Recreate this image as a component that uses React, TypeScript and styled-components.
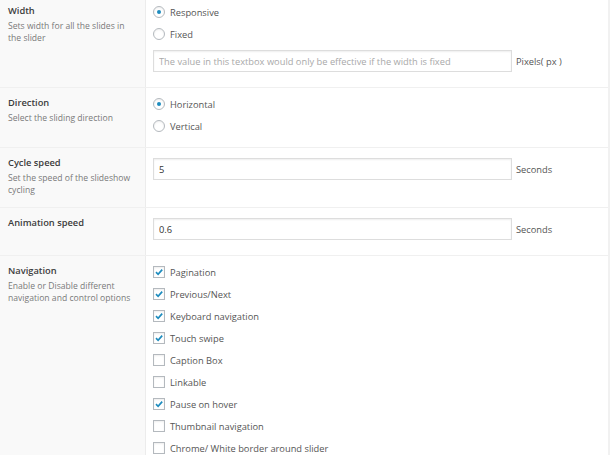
import React from 'react';
import styled, { createGlobalStyle } from 'styled-components';

const GlobalStyle = createGlobalStyle`
    html, body {
        margin: 0;
        padding: 0;
        background: #f1f1f1;
    }
    body {
        font-family: "Open Sans", "Liberation Sans", Arial, sans-serif;
        color: #444;
        overflow: hidden;
    }
`;

const Table = styled.div`
    width: 608px;
    margin-top: -4px;
    background: #fff;
`;

const Row = styled.div`
    display: flex;
    border-bottom: 1px solid #f0f0f0;
`;

const Heading = styled.div`
    flex: 0 0 129px;
    padding: 8px 8px 11px 8px;
    background: #f9f9f9;
    border-right: 1px solid #ececec;
`;

const Title = styled.div`
    font-size: 9.3px;
    font-weight: 600;
    line-height: 13px;
    color: #3c3c3c;
`;

const Description = styled.div`
    margin-top: 3px;
    font-size: 8.6px;
    line-height: 12px;
    color: #7a7a7a;
`;

const Content = styled.div`
    flex: 1;
    padding: 5px 10px 10px 7px;
`;

const OptionList = styled.div`
    display: flex;
    flex-direction: column;
`;

const Option = styled.label`
    display: flex;
    align-items: center;
    gap: 5px;
    height: 22px;
    font-size: 9.3px;
    color: #555;
`;

const RadioMark = styled.span<{ $checked: boolean }>`
    box-sizing: border-box;
    width: 12px;
    height: 12px;
    border-radius: 50%;
    border: 1px solid #b4b9be;
    background: #fff;
    box-shadow: inset 0 1px 2px rgba(0, 0, 0, 0.07);
    display: flex;
    align-items: center;
    justify-content: center;
    &::after {
        content: '';
        display: ${p => (p.$checked ? 'block' : 'none')};
        width: 4px;
        height: 4px;
        border-radius: 50%;
        background: #1e8cbe;
    }
`;

const CheckBox = styled.span`
    box-sizing: border-box;
    width: 12px;
    height: 12px;
    border: 1px solid #b4b9be;
    background: #fff;
    box-shadow: inset 0 1px 2px rgba(0, 0, 0, 0.07);
    display: flex;
    align-items: center;
    justify-content: center;
`;

const FieldLine = styled.div`
    display: flex;
    align-items: center;
    gap: 4px;
    margin: 5px 0;
`;

const TextBox = styled.input`
    box-sizing: border-box;
    width: 359px;
    height: 22px;
    margin: 0;
    padding: 0 5px;
    border: 1px solid #dddddd;
    box-shadow: inset 0 1px 2px rgba(0, 0, 0, 0.07);
    font-family: inherit;
    font-size: 9.3px;
    color: #333;
    outline: none;
    &::placeholder {
        color: #a9a9a9;
    }
`;

const Unit = styled.span`
    font-size: 9.3px;
    color: #555;
`;

function Radio({ label, checked }: { label: string, checked?: boolean }) {
    return (
        <Option>
            <RadioMark $checked={!!checked} />
            {label}
        </Option>
    );
}

function Check({ label, checked }: { label: string, checked?: boolean }) {
    return (
        <Option>
            <CheckBox>
                {checked && (
                    <svg width="10" height="10" viewBox="0 0 10 10">
                        <path d="M2 5.2 L4.1 7.3 L8.2 2.6" fill="none" stroke="#1e8cbe" strokeWidth="1.7" />
                    </svg>
                )}
            </CheckBox>
            {label}
        </Option>
    );
}

const navigation: [string, boolean][] = [
    ['Pagination', true],
    ['Previous/Next', true],
    ['Keyboard navigation', true],
    ['Touch swipe', true],
    ['Caption Box', false],
    ['Linkable', false],
    ['Pause on hover', true],
    ['Thumbnail navigation', false],
    ['Chrome/ White border around slider', false],
];

export default function App() {
    return (
        <>
            <GlobalStyle />
            <Table>
                <Row>
                    <Heading>
                        <Title>Width</Title>
                        <Description>Sets width for all the slides in the slider</Description>
                    </Heading>
                    <Content>
                        <OptionList>
                            <Radio label="Responsive" checked />
                            <Radio label="Fixed" />
                        </OptionList>
                        <FieldLine>
                            <TextBox placeholder="The value in this textbox would only be effective if the width is fixed" />
                            <Unit>Pixels( px )</Unit>
                        </FieldLine>
                    </Content>
                </Row>
                <Row>
                    <Heading>
                        <Title>Direction</Title>
                        <Description>Select the sliding direction</Description>
                    </Heading>
                    <Content>
                        <OptionList>
                            <Radio label="Horizontal" checked />
                            <Radio label="Vertical" />
                        </OptionList>
                    </Content>
                </Row>
                <Row>
                    <Heading>
                        <Title>Cycle speed</Title>
                        <Description>Set the speed of the slideshow cycling</Description>
                    </Heading>
                    <Content>
                        <FieldLine>
                            <TextBox defaultValue="5" />
                            <Unit>Seconds</Unit>
                        </FieldLine>
                    </Content>
                </Row>
                <Row>
                    <Heading>
                        <Title>Animation speed</Title>
                    </Heading>
                    <Content>
                        <FieldLine>
                            <TextBox defaultValue="0.6" />
                            <Unit>Seconds</Unit>
                        </FieldLine>
                    </Content>
                </Row>
                <Row>
                    <Heading>
                        <Title>Navigation</Title>
                        <Description>Enable or Disable different navigation and control options</Description>
                    </Heading>
                    <Content>
                        <OptionList>
                            {navigation.map(([label, on]) => (
                                <Check key={label} label={label} checked={on} />
                            ))}
                        </OptionList>
                    </Content>
                </Row>
            </Table>
        </>
    );
}
